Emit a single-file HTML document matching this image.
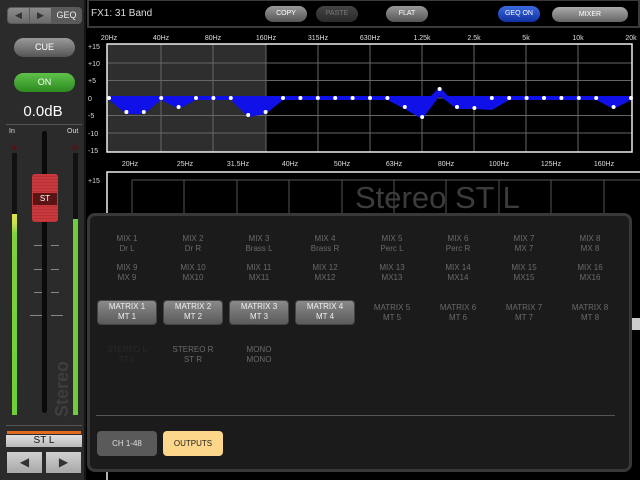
<!DOCTYPE html>
<html><head><meta charset="utf-8"><style>
*{margin:0;padding:0;box-sizing:border-box}
body{width:640px;height:480px;overflow:hidden;background:#000;font-family:"Liberation Sans",sans-serif;position:relative}
.abs{position:absolute}
.t{position:absolute;text-align:center;font-size:8px;color:#6a6a6a;line-height:10px;width:66px}
.btn{position:absolute;border-radius:4px;background:linear-gradient(#8a8a8a,#5a5a5a);color:#f0f0f0;font-size:8px;line-height:10px;text-align:center;padding-top:1px;border:1px solid #444}
</style></head><body>
<div class="abs" style="left:0;top:0;width:86px;height:480px;background:#2b2b2b;border-right:2px solid #151515"></div>
<div class="abs" style="left:7px;top:7px;width:75px;height:17px;border-radius:4px;background:#5a5a5a"></div>
<div class="abs" style="left:8px;top:8px;width:21px;height:15px;background:linear-gradient(#8c8c8c,#6a6a6a);border-radius:3px 0 0 3px;color:#333;font-size:9px;text-align:center;line-height:15px">◀</div>
<div class="abs" style="left:30px;top:8px;width:21px;height:15px;background:linear-gradient(#8c8c8c,#6a6a6a);color:#333;font-size:9px;text-align:center;line-height:15px">▶</div>
<div class="abs" style="left:52px;top:8px;width:29px;height:15px;color:#eee;font-size:9px;text-align:center;line-height:15px">GEQ</div>
<div class="abs" style="left:14px;top:38px;width:61px;height:19px;border-radius:10px;background:linear-gradient(#9a9a9a,#555);color:#fff;font-size:9px;text-align:center;line-height:19px">CUE</div>
<div class="abs" style="left:14px;top:73px;width:61px;height:19px;border-radius:10px;background:linear-gradient(#5ec24a,#2d8a1f);color:#fff;font-size:9px;text-align:center;line-height:19px">ON</div>
<div class="abs" style="left:0;top:103px;width:86px;text-align:center;color:#fff;font-size:15px">0.0dB</div>
<div class="abs" style="left:6px;top:124px;width:76px;height:1px;background:#555"></div>
<div class="abs" style="left:9px;top:128px;color:#ddd;font-size:7px">In</div>
<div class="abs" style="left:67px;top:128px;color:#ddd;font-size:7px">Out</div>
<div class="abs" style="left:11px;top:145px;width:6px;height:5px;border-radius:3px;background:#4a1a1a"></div>
<div class="abs" style="left:72px;top:145px;width:6px;height:5px;border-radius:3px;background:#4a1a1a"></div>
<div class="abs" style="left:12px;top:153px;width:5px;height:262px;background:#111"></div>
<div class="abs" style="left:12px;top:214px;width:5px;height:201px;background:linear-gradient(#e0e050 0,#c6e050 10px,#7fd040 20px,#6ccf3a)"></div>
<div class="abs" style="left:73px;top:153px;width:5px;height:262px;background:#111"></div>
<div class="abs" style="left:73px;top:219px;width:5px;height:196px;background:#6ccf3a"></div>
<div class="abs" style="left:42px;top:131px;width:5px;height:282px;border-radius:3px;background:#0a0a0a"></div>
<div class="abs" style="left:34px;top:245px;width:8px;height:1px;background:#888"></div><div class="abs" style="left:51px;top:245px;width:8px;height:1px;background:#888"></div>
<div class="abs" style="left:34px;top:269px;width:8px;height:1px;background:#888"></div><div class="abs" style="left:51px;top:269px;width:8px;height:1px;background:#888"></div>
<div class="abs" style="left:34px;top:292px;width:8px;height:1px;background:#888"></div><div class="abs" style="left:51px;top:292px;width:8px;height:1px;background:#888"></div>
<div class="abs" style="left:30px;top:315px;width:12px;height:1px;background:#888"></div><div class="abs" style="left:51px;top:315px;width:12px;height:1px;background:#888"></div>
<div class="abs" style="left:32px;top:174px;width:26px;height:48px;border-radius:3px;background:repeating-linear-gradient(#c8383c 0,#c8383c 2px,#a52a2e 3px);"></div>
<div class="abs" style="left:33px;top:193px;width:24px;height:12px;background:#5a1414;color:#fff;font-size:8px;text-align:center;line-height:12px">ST</div>
<div class="abs" style="width:80px;color:#3e3e3e;font-size:18px;font-weight:bold;transform:rotate(-90deg);transform-origin:0 0;top:417px;left:52px;white-space:nowrap">Stereo</div>
<div class="abs" style="left:6px;top:425px;width:76px;height:1px;background:#555"></div>
<div class="abs" style="left:7px;top:431px;width:74px;height:3px;background:#e06a20"></div>
<div class="abs" style="left:6px;top:435px;width:76px;height:12px;background:linear-gradient(#e0e0e0,#b8b8b8);color:#111;font-size:10px;text-align:center;line-height:12px">ST L</div>
<div class="abs" style="left:7px;top:452px;width:35px;height:21px;background:linear-gradient(#d0d0d0,#a8a8a8);color:#333;font-size:12px;text-align:center;line-height:21px">◀</div>
<div class="abs" style="left:46px;top:452px;width:35px;height:21px;background:linear-gradient(#d0d0d0,#a8a8a8);color:#333;font-size:12px;text-align:center;line-height:21px">▶</div>

<div class="abs" style="left:87px;top:0;width:553px;height:28px;background:#000;border:2px solid #3a3a3a;border-top-width:1px"></div>
<div class="abs" style="left:91px;top:8px;color:#ddd;font-size:10px">FX1: 31 Band</div>
<div class="abs" style="left:265px;top:6px;width:42px;height:16px;border-radius:8px;background:linear-gradient(#999,#555);color:#fff;font-size:7px;text-align:center;line-height:16px">COPY</div>
<div class="abs" style="left:316px;top:6px;width:42px;height:16px;border-radius:8px;background:linear-gradient(#444,#2a2a2a);color:#777;font-size:7px;text-align:center;line-height:16px">PASTE</div>
<div class="abs" style="left:386px;top:6px;width:42px;height:16px;border-radius:8px;background:linear-gradient(#999,#555);color:#fff;font-size:7px;text-align:center;line-height:16px">FLAT</div>
<div class="abs" style="left:498px;top:6px;width:42px;height:16px;border-radius:8px;background:linear-gradient(#3a6ae0,#1030a0);color:#fff;font-size:7px;text-align:center;line-height:16px">GEQ ON</div>
<div class="abs" style="left:552px;top:7px;width:76px;height:15px;border-radius:8px;background:linear-gradient(#aaa,#666);color:#fff;font-size:7px;text-align:center;line-height:15px">MIXER</div>

<svg class="abs" style="left:0;top:0" width="640" height="480" font-family="Liberation Sans" font-size="7" fill="#ddd">
<g text-anchor="middle">
<text x="109" y="40">20Hz</text><text x="161" y="40">40Hz</text><text x="213" y="40">80Hz</text><text x="266" y="40">160Hz</text><text x="318" y="40">315Hz</text><text x="370" y="40">630Hz</text><text x="422" y="40">1.25k</text><text x="474" y="40">2.5k</text><text x="526" y="40">5k</text><text x="578" y="40">10k</text><text x="631" y="40">20k</text>
<text x="130" y="166">20Hz</text><text x="185" y="166">25Hz</text><text x="238" y="166">31.5Hz</text><text x="290" y="166">40Hz</text><text x="342" y="166">50Hz</text><text x="394" y="166">63Hz</text><text x="446" y="166">80Hz</text><text x="499" y="166">100Hz</text><text x="551" y="166">125Hz</text><text x="604" y="166">160Hz</text>
</g>
<g><text x="88" y="49">+15</text><text x="88" y="66">+10</text><text x="88" y="83">+5</text><text x="88" y="101">0</text><text x="88" y="118">-5</text><text x="88" y="136">-10</text><text x="88" y="153">-15</text><text x="88" y="183">+15</text></g>
<rect x="107" y="44" width="159" height="108" fill="#2e2e2e"/>
<g stroke="#666" stroke-width="1">
<line x1="107" y1="63" x2="632" y2="63"/><line x1="107" y1="80.5" x2="632" y2="80.5"/><line x1="107" y1="98" x2="632" y2="98"/><line x1="107" y1="115.5" x2="632" y2="115.5"/><line x1="107" y1="133" x2="632" y2="133"/>
<line x1="161" y1="44" x2="161" y2="152"/><line x1="213" y1="44" x2="213" y2="152"/><line x1="266" y1="44" x2="266" y2="152"/><line x1="318" y1="44" x2="318" y2="152"/><line x1="370" y1="44" x2="370" y2="152"/><line x1="422" y1="44" x2="422" y2="152"/><line x1="474" y1="44" x2="474" y2="152"/><line x1="526" y1="44" x2="526" y2="152"/><line x1="578" y1="44" x2="578" y2="152"/>
</g>
<polygon fill="#1010e8" points="109,96 431,96 439.6,87 448,96 631,96 631,100 613.6,109 596.2,100 509.2,100 491.8,110 474.4,109 457,109 439.6,96 422.2,119 404.8,109 387.4,100 283,100 265.6,114 248.2,117 230.8,100 196,100 178.6,109 161.2,100 143.8,114 126.4,114 109,100"/>
<rect x="107" y="44" width="525" height="108" fill="none" stroke="#eee" stroke-width="1.5"/>
<g fill="#fff">
<circle cx="109" cy="98" r="2"/><circle cx="126.4" cy="112" r="2"/><circle cx="143.8" cy="112" r="2"/><circle cx="161.2" cy="98" r="2"/><circle cx="178.6" cy="107" r="2"/><circle cx="196" cy="98" r="2"/><circle cx="213.4" cy="98" r="2"/><circle cx="230.8" cy="98" r="2"/><circle cx="248.2" cy="115" r="2"/><circle cx="265.6" cy="112" r="2"/><circle cx="283" cy="98" r="2"/><circle cx="300.4" cy="98" r="2"/><circle cx="317.8" cy="98" r="2"/><circle cx="335.2" cy="98" r="2"/><circle cx="352.6" cy="98" r="2"/><circle cx="370" cy="98" r="2"/><circle cx="387.4" cy="98" r="2"/><circle cx="404.8" cy="107" r="2"/><circle cx="422.2" cy="117" r="2"/><circle cx="439.6" cy="89" r="2"/><circle cx="457" cy="107" r="2"/><circle cx="474.4" cy="108" r="2"/><circle cx="491.8" cy="98" r="2"/><circle cx="509.2" cy="98" r="2"/><circle cx="526.6" cy="98" r="2"/><circle cx="544" cy="98" r="2"/><circle cx="561.4" cy="98" r="2"/><circle cx="578.8" cy="98" r="2"/><circle cx="596.2" cy="98" r="2"/><circle cx="613.6" cy="107" r="2"/><circle cx="631" cy="98" r="2"/>
</g>
<rect x="107" y="172" width="540" height="320" fill="none" stroke="#eee" stroke-width="1.5"/>
<g stroke="#555"><line x1="132" y1="180" x2="640" y2="180"/><line x1="132" y1="180" x2="132" y2="215"/><line x1="184" y1="180" x2="184" y2="215"/><line x1="237" y1="180" x2="237" y2="215"/><line x1="289" y1="180" x2="289" y2="215"/><line x1="342" y1="180" x2="342" y2="215"/><line x1="394" y1="180" x2="394" y2="215"/><line x1="446" y1="180" x2="446" y2="215"/><line x1="499" y1="180" x2="499" y2="215"/><line x1="551" y1="180" x2="551" y2="215"/><line x1="604" y1="180" x2="604" y2="215"/></g>
<text x="355" y="208" font-size="31" fill="#3c3c3c">Stereo ST L</text>
<rect x="632" y="318" width="8" height="12" fill="#ccc"/>
</svg>

<div class="abs" style="left:87px;top:213px;width:545px;height:259px;border-radius:8px;background:#1b1b1b;border:3px solid #383838"></div>
<div class="t" style="left:94px;top:234px">MIX 1<br>Dr L</div><div class="t" style="left:160px;top:234px">MIX 2<br>Dr R</div><div class="t" style="left:226px;top:234px">MIX 3<br>Brass L</div><div class="t" style="left:292px;top:234px">MIX 4<br>Brass R</div><div class="t" style="left:359px;top:234px">MIX 5<br>Perc L</div><div class="t" style="left:425px;top:234px">MIX 6<br>Perc R</div><div class="t" style="left:491px;top:234px">MIX 7<br>MX 7</div><div class="t" style="left:557px;top:234px">MIX 8<br>MX 8</div>
<div class="t" style="left:94px;top:263px">MIX 9<br>MX 9</div><div class="t" style="left:160px;top:263px">MIX 10<br>MX10</div><div class="t" style="left:226px;top:263px">MIX 11<br>MX11</div><div class="t" style="left:292px;top:263px">MIX 12<br>MX12</div><div class="t" style="left:359px;top:263px">MIX 13<br>MX13</div><div class="t" style="left:425px;top:263px">MIX 14<br>MX14</div><div class="t" style="left:491px;top:263px">MIX 15<br>MX15</div><div class="t" style="left:557px;top:263px">MIX 16<br>MX16</div>
<div class="btn" style="left:97px;top:300px;width:60px;height:25px">MATRIX 1<br>MT 1</div><div class="btn" style="left:163px;top:300px;width:60px;height:25px">MATRIX 2<br>MT 2</div><div class="btn" style="left:229px;top:300px;width:60px;height:25px">MATRIX 3<br>MT 3</div><div class="btn" style="left:295px;top:300px;width:60px;height:25px">MATRIX 4<br>MT 4</div>
<div class="t" style="left:359px;top:303px">MATRIX 5<br>MT 5</div><div class="t" style="left:425px;top:303px">MATRIX 6<br>MT 6</div><div class="t" style="left:491px;top:303px">MATRIX 7<br>MT 7</div><div class="t" style="left:557px;top:303px">MATRIX 8<br>MT 8</div>
<div class="t" style="left:94px;top:345px;color:#2a2a2a">STEREO L<br>ST L</div><div class="t" style="left:160px;top:345px">STEREO R<br>ST R</div><div class="t" style="left:226px;top:345px">MONO<br>MONO</div>
<div class="abs" style="left:96px;top:415px;width:519px;height:1px;background:#555"></div>
<div class="abs" style="left:97px;top:431px;width:60px;height:25px;border-radius:4px;background:#5a5a5a;color:#ddd;font-size:8px;text-align:center;line-height:25px">CH 1-48</div>
<div class="abs" style="left:163px;top:431px;width:60px;height:25px;border-radius:4px;background:#fcd68a;color:#222;font-size:8px;text-align:center;line-height:25px">OUTPUTS</div>
</body></html>
